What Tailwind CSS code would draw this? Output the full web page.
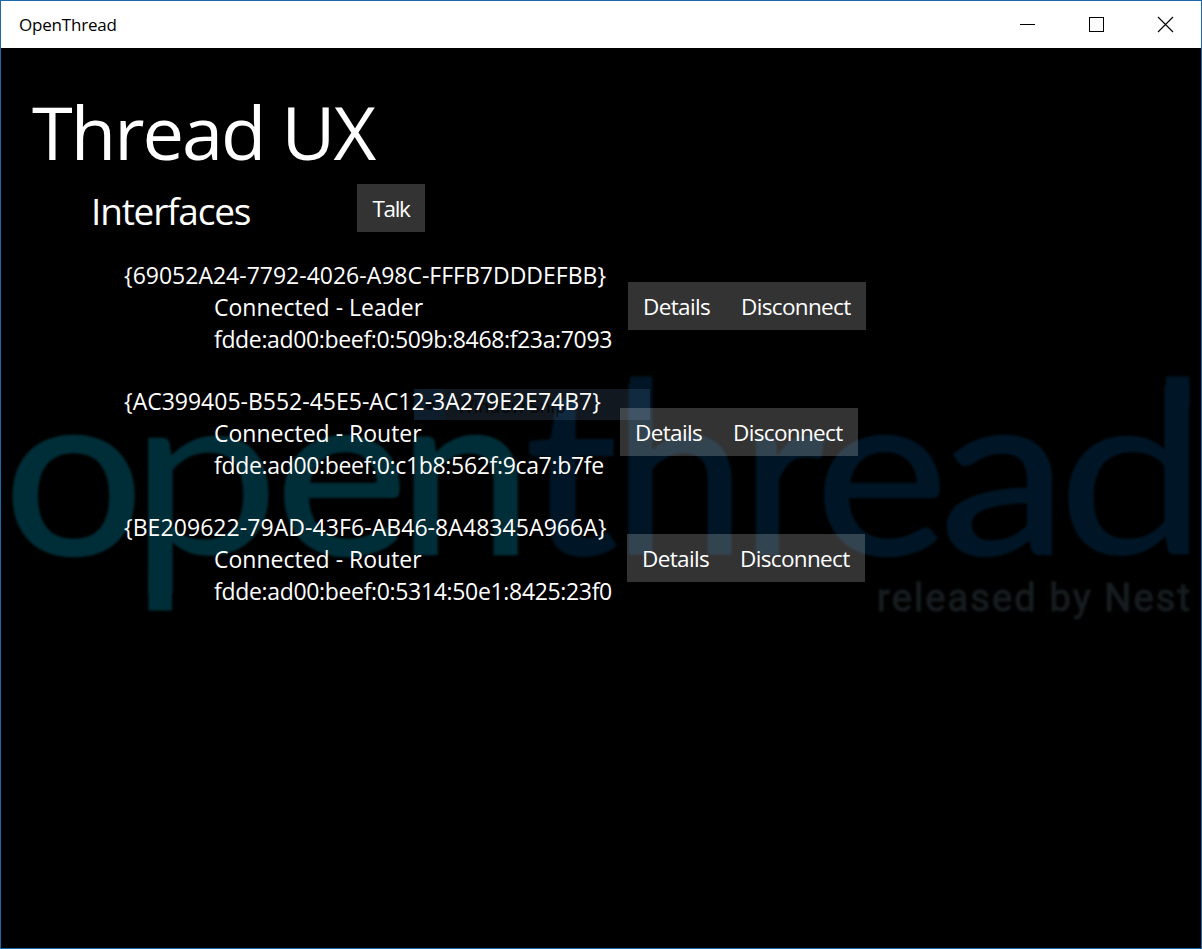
<!DOCTYPE html>
<html lang="en">
<head>
<meta charset="utf-8">
<title>OpenThread</title>
<script src="https://cdn.jsdelivr.net/npm/@tailwindcss/browser@4"></script>
</head>
<body class="h-[949px] w-[1202px] overflow-hidden bg-black font-['Open_Sans','Noto_Sans',sans-serif]">
<div class="relative flex h-full w-full flex-col border border-[#1b69a8] bg-black text-white">
  <header class="flex h-[47px] shrink-0 items-center justify-between bg-white pl-[18px] text-black">
    <span class="text-[17px] tracking-[-0.2px]">OpenThread</span>
    <div class="flex h-full">
      <svg class="h-[47px] w-[69px]" viewBox="0 0 69 47" stroke="#000" fill="none"><path d="M26 23.5h15"/></svg>
      <svg class="h-[47px] w-[69px]" viewBox="0 0 69 47" stroke="#000" fill="none" shape-rendering="crispEdges"><path d="M26.5 16.5h14v14h-14z"/></svg>
      <svg class="h-[47px] w-[69px]" viewBox="0 0 69 47" stroke="#000" stroke-width="1.1" fill="none"><path d="M26 16l15 15M41 16l-15 15"/></svg>
    </div>
  </header>

  <!-- wordmark behind the content -->
  <svg class="absolute left-[-1px] top-[-1px] h-[949px] w-[1202px] blur-[1px]" viewBox="0 0 1202 949">
    <g font-family="Lato, sans-serif" font-size="229" stroke-width="2.5">
      <g fill="#002e38" stroke="#002e38">
        <text transform="translate(3.500 554) scale(1.08 1)">o</text>
        <text transform="translate(129.500 554) scale(1.17 1)" stroke-width="0.5">p</text>
        <text transform="translate(275 554) scale(1.1 1)">e</text>
        <text transform="translate(398 554) scale(1.05 1)">n</text>
        <path stroke="none" d="M148.500 570h23.500v40.500h-23.500z"/>
      </g>
      <g fill="#001626" stroke="#001626">
        <text transform="translate(525 554) scale(1.13 1)">t</text>
        <text transform="translate(613 554) scale(1.04 1)">h</text>
        <text transform="translate(741 554)">r</text>
        <text transform="translate(815 554) scale(1.1 1)">e</text>
        <text transform="translate(940 554) scale(1.12 1)">a</text>
        <text transform="translate(1057 554) scale(1.175 1)" stroke-width="0.5">d</text>
        <path stroke="none" d="M630 376.500h22v30h-22zM1166 376.500h23.500v30h-23.500z"/>
      </g>
    </g>
    <text fill="#171d20" stroke="#171d20" font-family="Roboto, sans-serif" font-size="38" x="877" y="611" textLength="313">released by Nest</text>
  </svg>

  <!-- fading menu entry -->
  <div class="absolute left-[413px] top-[388px] flex h-[31px] w-[236px] items-center bg-[#82aadc]/14">
    <div class="flex h-full w-[31px] items-center justify-center bg-[#003060]/20"><span class="h-2.5 w-2.5 rounded-full bg-black/60"></span></div>
    <span class="pl-3 pt-1 text-[18px] text-black/70">Window Snip</span>
  </div>

  <main class="relative flex flex-col pl-[30px] pt-[46px]">
    <h1 class="h-[90px] pl-px text-[74px] leading-[76px] tracking-[-2px]">Thread UX</h1>
    <div class="flex h-[48px] w-[394px] items-center justify-between pl-[60px]">
      <h2 class="pt-1.5 text-[37px] leading-[48px] tracking-[-1.2px]">Interfaces</h2>
      <button class="h-[48px] w-[68px] bg-white/20 pt-0.5 text-[22.5px] tracking-[-1.3px]">Talk</button>
    </div>
    <ul class="flex flex-col gap-[30px] pl-[93px] pt-[27px] text-[23px] leading-[32px]">
      <li class="flex h-24 items-center">
        <div class="w-[504px] whitespace-nowrap"><p>{69052A24-7792-4026-A98C-FFFB7DDDEFBB}</p><p class="pl-[90px]">Connected - Leader</p><p class="pl-[90px] tracking-[-0.35px]">fdde:ad00:beef:0:509b:8468:f23a:7093</p></div>
        <div class="mb-0.5 flex h-12 w-[238px] items-center bg-white/20 pl-[15px] pt-0.5 text-[22.5px] tracking-[-0.65px]"><button class="w-[98px] text-left">Details</button><button>Disconnect</button></div>
      </li>
      <li class="flex h-24 items-center">
        <div class="w-[496px] whitespace-nowrap"><p>{AC399405-B552-45E5-AC12-3A279E2E74B7}</p><p class="pl-[90px]">Connected - Router</p><p class="pl-[90px] tracking-[-0.33px]">fdde:ad00:beef:0:c1b8:562f:9ca7:b7fe</p></div>
        <div class="mb-0.5 flex h-12 w-[238px] items-center bg-white/20 pl-[15px] pt-0.5 text-[22.5px] tracking-[-0.65px]"><button class="w-[98px] text-left">Details</button><button>Disconnect</button></div>
      </li>
      <li class="flex h-24 items-center">
        <div class="w-[503px] whitespace-nowrap"><p class="tracking-[0.07px]">{BE209622-79AD-43F6-AB46-8A48345A966A}</p><p class="pl-[90px]">Connected - Router</p><p class="pl-[90px] tracking-[-0.33px]">fdde:ad00:beef:0:5314:50e1:8425:23f0</p></div>
        <div class="mb-0.5 flex h-12 w-[238px] items-center bg-white/20 pl-[15px] pt-0.5 text-[22.5px] tracking-[-0.65px]"><button class="w-[98px] text-left">Details</button><button>Disconnect</button></div>
      </li>
    </ul>
  </main>
</div>
</body>
</html>
